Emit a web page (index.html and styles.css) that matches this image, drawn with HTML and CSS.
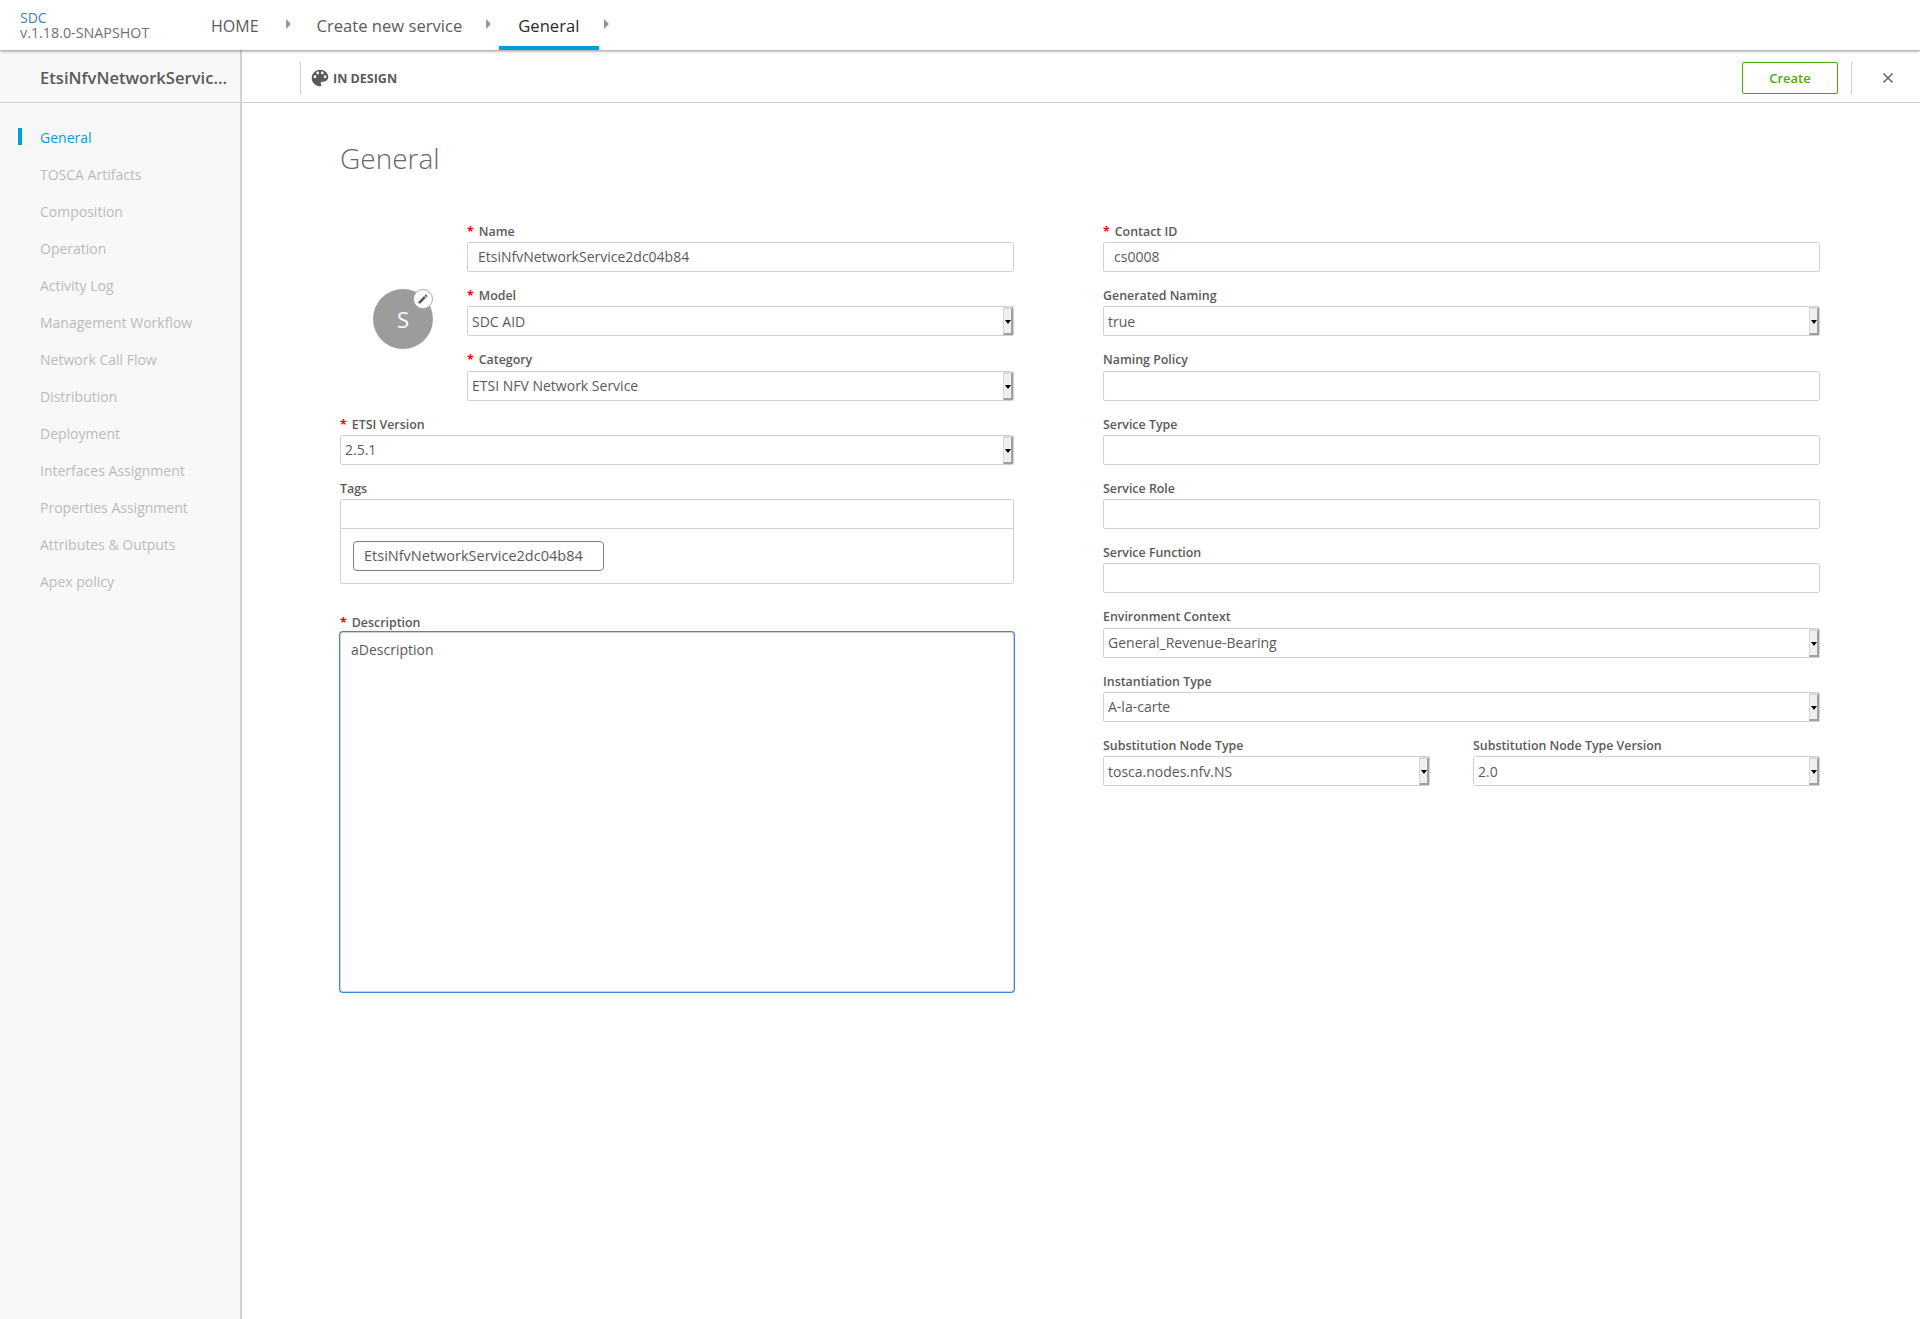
FILE: index.html
```html
<!DOCTYPE html>
<html lang="en">
<head>
  <meta charset="UTF-8">
  <title>SDC</title>
  <link rel="stylesheet" href="styles.css">
</head>
<body>
  <header class="topbar">
    <div class="brand">
      <div class="brand-name">SDC</div>
      <div class="brand-version">v.1.18.0-SNAPSHOT</div>
    </div>
    <nav class="crumbs">
      <a class="crumb crumb-home">HOME</a>
      <span class="crumb-arrow"></span>
      <a class="crumb crumb-create">Create new service</a>
      <span class="crumb-arrow"></span>
      <a class="crumb crumb-active">General</a>
      <span class="crumb-arrow"></span>
    </nav>
  </header>

  <div class="workspace">
    <aside class="sidebar">
      <div class="sidebar-title">EtsiNfvNetworkServic...</div>
      <ul class="menu">
        <li class="menu-item menu-active">General</li>
        <li class="menu-item">TOSCA Artifacts</li>
        <li class="menu-item">Composition</li>
        <li class="menu-item">Operation</li>
        <li class="menu-item">Activity Log</li>
        <li class="menu-item">Management Workflow</li>
        <li class="menu-item">Network Call Flow</li>
        <li class="menu-item">Distribution</li>
        <li class="menu-item">Deployment</li>
        <li class="menu-item">Interfaces Assignment</li>
        <li class="menu-item">Properties Assignment</li>
        <li class="menu-item">Attributes &amp; Outputs</li>
        <li class="menu-item">Apex policy</li>
      </ul>
    </aside>

    <main class="content">
      <div class="actionbar">
        <div class="status">
          <svg class="status-icon" viewBox="0 0 24 24"><path d="M12 3c-4.97 0-9 4.03-9 9s4.03 9 9 9c.83 0 1.5-.67 1.5-1.5 0-.39-.15-.74-.39-1.01-.23-.26-.38-.61-.38-.99 0-.83.67-1.5 1.5-1.5H16c2.76 0 5-2.24 5-5 0-4.42-4.03-8-9-8zm-5.5 9c-.83 0-1.5-.67-1.5-1.5S5.67 9 6.5 9 8 9.67 8 10.5 7.33 12 6.5 12zm3-4C8.67 8 8 7.33 8 6.5S8.67 5 9.5 5s1.5.67 1.5 1.5S10.33 8 9.5 8zm5 0c-.83 0-1.5-.67-1.5-1.5S13.67 5 14.5 5s1.5.67 1.5 1.5S15.33 8 14.5 8zm3 4c-.83 0-1.5-.67-1.5-1.5S16.67 9 17.5 9s1.5.67 1.5 1.5-.67 1.5-1.5 1.5z"/></svg>
          <span class="status-text">IN DESIGN</span>
        </div>
        <button class="btn-create" type="button">Create</button>
        <div class="close-wrap">
          <svg class="close-icon" viewBox="0 0 12 12"><path d="M1.5 1.5l9 9M10.5 1.5l-9 9"/></svg>
        </div>
      </div>

      <section class="page">
        <h1 class="page-title">General</h1>
        <div class="form">
          <div class="col-left">
            <div class="top-row">
              <div class="avatar-box">
                <div class="avatar">S
                  <span class="avatar-edit">
                    <svg viewBox="0 0 24 24"><path d="M3 17.25V21h3.75L17.81 9.94l-3.75-3.75L3 17.25zM20.71 7.04a1 1 0 0 0 0-1.41l-2.34-2.34a1 1 0 0 0-1.41 0l-1.83 1.83 3.75 3.75 1.83-1.83z"/></svg>
                  </span>
                </div>
              </div>
              <div class="top-fields">
                <div class="field">
                  <label class="req">Name</label>
                  <input class="text-input text-pad" type="text" value="EtsiNfvNetworkService2dc04b84">
                </div>
                <div class="field">
                  <label class="req">Model</label>
                  <div class="select-box"><select><option>SDC AID</option></select><span class="select-arrow"></span></div>
                </div>
                <div class="field">
                  <label class="req">Category</label>
                  <div class="select-box"><select><option>ETSI NFV Network Service</option></select><span class="select-arrow"></span></div>
                </div>
              </div>
            </div>
            <div class="field">
              <label class="req">ETSI Version</label>
              <div class="select-box"><select><option>2.5.1</option></select><span class="select-arrow"></span></div>
            </div>
            <div class="field field-tags">
              <label>Tags</label>
              <div class="tags">
                <input class="tags-input" type="text">
                <div class="tags-list"><span class="tag">EtsiNfvNetworkService2dc04b84</span></div>
              </div>
            </div>
            <div class="field">
              <label class="req">Description</label>
              <textarea class="description">aDescription</textarea>
            </div>
          </div>

          <div class="col-right">
            <div class="field">
              <label class="req">Contact ID</label>
              <input class="text-input text-pad" type="text" value="cs0008">
            </div>
            <div class="field">
              <label>Generated Naming</label>
              <div class="select-box"><select><option>true</option></select><span class="select-arrow"></span></div>
            </div>
            <div class="field">
              <label>Naming Policy</label>
              <input class="text-input" type="text">
            </div>
            <div class="field">
              <label>Service Type</label>
              <input class="text-input" type="text">
            </div>
            <div class="field">
              <label>Service Role</label>
              <input class="text-input" type="text">
            </div>
            <div class="field">
              <label>Service Function</label>
              <input class="text-input" type="text">
            </div>
            <div class="field">
              <label>Environment Context</label>
              <div class="select-box"><select><option>General_Revenue-Bearing</option></select><span class="select-arrow"></span></div>
            </div>
            <div class="field">
              <label>Instantiation Type</label>
              <div class="select-box"><select><option>A-la-carte</option></select><span class="select-arrow"></span></div>
            </div>
            <div class="field-pair">
              <div class="field">
                <label>Substitution Node Type</label>
                <div class="select-box"><select><option>tosca.nodes.nfv.NS</option></select><span class="select-arrow"></span></div>
              </div>
              <div class="field">
                <label>Substitution Node Type Version</label>
                <div class="select-box"><select><option>2.0</option></select><span class="select-arrow"></span></div>
              </div>
            </div>
          </div>
        </div>
      </section>
    </main>
  </div>
</body>
</html>
```

FILE: styles.css
```css
* {
  box-sizing: border-box;
}
body {
  margin: 0;
  height: 1319px;
  overflow: hidden;
  display: flex;
  flex-direction: column;
  font-family: "Open Sans", sans-serif;
  color: #5a5a5a;
  background: #fff;
}

/* top bar */
.topbar {
  height: 50px;
  flex: none;
  display: flex;
  align-items: stretch;
  background: #fff;
  box-shadow: 0 1px 3px rgba(0, 0, 0, 0.45);
  position: relative;
  z-index: 2;
}
.brand {
  width: 211px;
  padding: 10px 0 0 20px;
  font-size: 14px;
  line-height: 15px;
}
.brand-name {
  color: #3b7fbb;
}
.brand-version {
  color: #717171;
  font-size: 14.3px;
}
.crumbs {
  display: flex;
  align-items: stretch;
}
.crumb {
  font-size: 16.6px;
  line-height: 52px;
  color: #5a5a5a;
}
.crumb-home {
  font-size: 16px;
  margin-right: 27px;
}
.crumb-create {
  margin-right: 24px;
}
.crumb-active {
  color: #2a2a2a;
  padding: 0 20px 0 19px;
  margin-left: -18px;
  border-bottom: 4px solid #009fdb;
}
.crumb-arrow {
  width: 0;
  height: 0;
  margin: 19px 26px 0 0;
  border-left: 5px solid #969696;
  border-top: 5px solid transparent;
  border-bottom: 5px solid transparent;
}
.crumb-active + .crumb-arrow {
  margin-left: 5px;
}

.workspace {
  flex: 1;
  display: flex;
  min-height: 0;
}

/* left menu */
.sidebar {
  width: 242px;
  flex: none;
  background: #f8f8f8;
  border-right: 2px solid #d2d2d2;
}
.sidebar-title {
  height: 53px;
  padding: 3px 0 0 40px;
  font-size: 16.6px;
  font-weight: 600;
  line-height: 49px;
  color: #5a5a5a;
  white-space: nowrap;
  border-bottom: 1px solid #d2d2d2;
  margin-right: -2px;
}
.menu {
  list-style: none;
  margin: 0;
  padding: 16px 0 0;
}
.menu-item {
  height: 37px;
  padding-left: 40px;
  font-size: 14px;
  line-height: 37px;
  color: #bbb;
}
.menu-active {
  color: #009fdb;
  background: linear-gradient(#009fdb, #009fdb) 18px 9px / 4px 17px no-repeat;
}

/* action bar */
.content {
  flex: 1;
  min-width: 0;
}
.actionbar {
  height: 53px;
  padding-top: 3px;
  display: flex;
  align-items: center;
  border-bottom: 1px solid #d2d2d2;
}
.status {
  margin-left: 58px;
  height: 32px;
  padding-left: 8px;
  display: flex;
  align-items: center;
  gap: 2px;
  border-left: 1px solid #d2d2d2;
  font-size: 12.5px;
  font-weight: 700;
  color: #5a5a5a;
}
.status-text {
  padding-top: 2px;
}
.status-icon {
  width: 22px;
  height: 22px;
  fill: #5a5a5a;
}
.btn-create {
  margin-left: auto;
  width: 96px;
  height: 32px;
  border: 1px solid #4ca90c;
  border-radius: 2px;
  background: #fff;
  color: #4ca90c;
  font-family: inherit;
  font-size: 13px;
  font-weight: 600;
}
.close-wrap {
  margin-left: 13px;
  width: 69px;
  height: 32px;
  display: flex;
  align-items: center;
  padding-left: 30px;
  border-left: 1px solid #d2d2d2;
}
.close-icon {
  width: 12px;
  height: 12px;
  fill: none;
  stroke: #5a5a5a;
  stroke-width: 1.4;
}

/* form */
.page {
  padding: 36px 100px 0 98px;
}
.page-title {
  margin: 0 0 45.85px;
  font-size: 28px;
  font-weight: 300;
  line-height: 38px;
  color: #666;
}
.form {
  display: flex;
  justify-content: space-between;
}
.col-left {
  width: 674px;
}
.col-right {
  width: 717px;
}
.top-row {
  display: flex;
}
.avatar-box {
  width: 127px;
  flex: none;
  padding: 66px 0 0 33px;
}
.avatar {
  position: relative;
  width: 60px;
  height: 60px;
  border-radius: 50%;
  background: #9c9c9c;
  color: #fff;
  font-size: 22px;
  line-height: 60px;
  text-align: center;
}
.avatar-edit {
  position: absolute;
  top: 0;
  right: 0;
  width: 20px;
  height: 20px;
  border-radius: 50%;
  background: #fff;
  border: 1px solid #aaa;
  display: flex;
  align-items: center;
  justify-content: center;
}
.avatar-edit svg {
  width: 12px;
  height: 12px;
  fill: #5a5a5a;
}
.top-fields {
  flex: 1;
  min-width: 0;
}
.field {
  margin-bottom: 15px;
}
.field label {
  display: block;
  height: 19.25px;
  font-size: 12.4px;
  font-weight: 600;
  line-height: 17px;
  color: #5a5a5a;
}
.req::before {
  content: "*";
  margin-right: 5px;
  color: #f00;
  font-weight: 700;
}
.text-input {
  display: block;
  width: 100%;
  height: 30px;
  padding: 0 5px 2px;
  border: 1px solid #d2d2d2;
  border-radius: 2px;
  outline: none;
  font-family: inherit;
  font-size: 14px;
  color: #5a5a5a;
}
.text-pad {
  padding-left: 10px;
}
.select-box {
  display: flex;
  height: 30px;
  border: 1px solid #d2d2d2;
  border-radius: 2px;
}
.select-box select {
  flex: 1;
  min-width: 0;
  appearance: none;
  border: 0;
  outline: none;
  padding: 0 4px;
  background: #fff;
  font-family: inherit;
  font-size: 14px;
  color: #5a5a5a;
}
/* small raised arrow button, the browser's old style dropdown */
.select-arrow {
  flex: none;
  position: relative;
  width: 10px;
  background: #f0f0f0;
  border-style: solid;
  border-width: 2px 2px 2px 1px;
  border-color: #d8d8d8 #a0a0a0 #a0a0a0 #d8d8d8;
}
.select-arrow::after {
  content: "";
  position: absolute;
  left: 1px;
  top: 11px;
  border-top: 4px solid #000;
  border-left: 3px solid transparent;
  border-right: 3px solid transparent;
}
.field-tags {
  margin-bottom: 30px;
}
.tags {
  border: 1px solid #d2d2d2;
  border-radius: 2px;
}
.tags-input {
  display: block;
  width: 100%;
  height: 29px;
  border: 0;
  border-bottom: 1px solid #d2d2d2;
  outline: none;
}
.tags-list {
  height: 54px;
  padding: 12px;
}
.tag {
  display: block;
  width: 251px;
  height: 30px;
  padding-left: 10px;
  border: 1px solid #7f7f7f;
  border-radius: 4px;
  font-size: 14.5px;
  line-height: 27px;
  color: #5a5a5a;
}
/* focused: grey border with the blue ring just outside it */
.description {
  display: block;
  width: 100%;
  height: 360px;
  margin-top: -1px;
  padding: 7px 10px;
  border: 1px solid #d2d2d2;
  border-radius: 3px;
  box-shadow: 0 0 0 1px #3f86d8;
  outline: none;
  resize: none;
  font-family: inherit;
  font-size: 14px;
  line-height: 20px;
  color: #5a5a5a;
}
.field-pair {
  display: flex;
  gap: 43px;
}
.field-pair .field:first-child {
  width: 327px;
  flex: none;
}
.field-pair .field:last-child {
  flex: 1;
}
```
